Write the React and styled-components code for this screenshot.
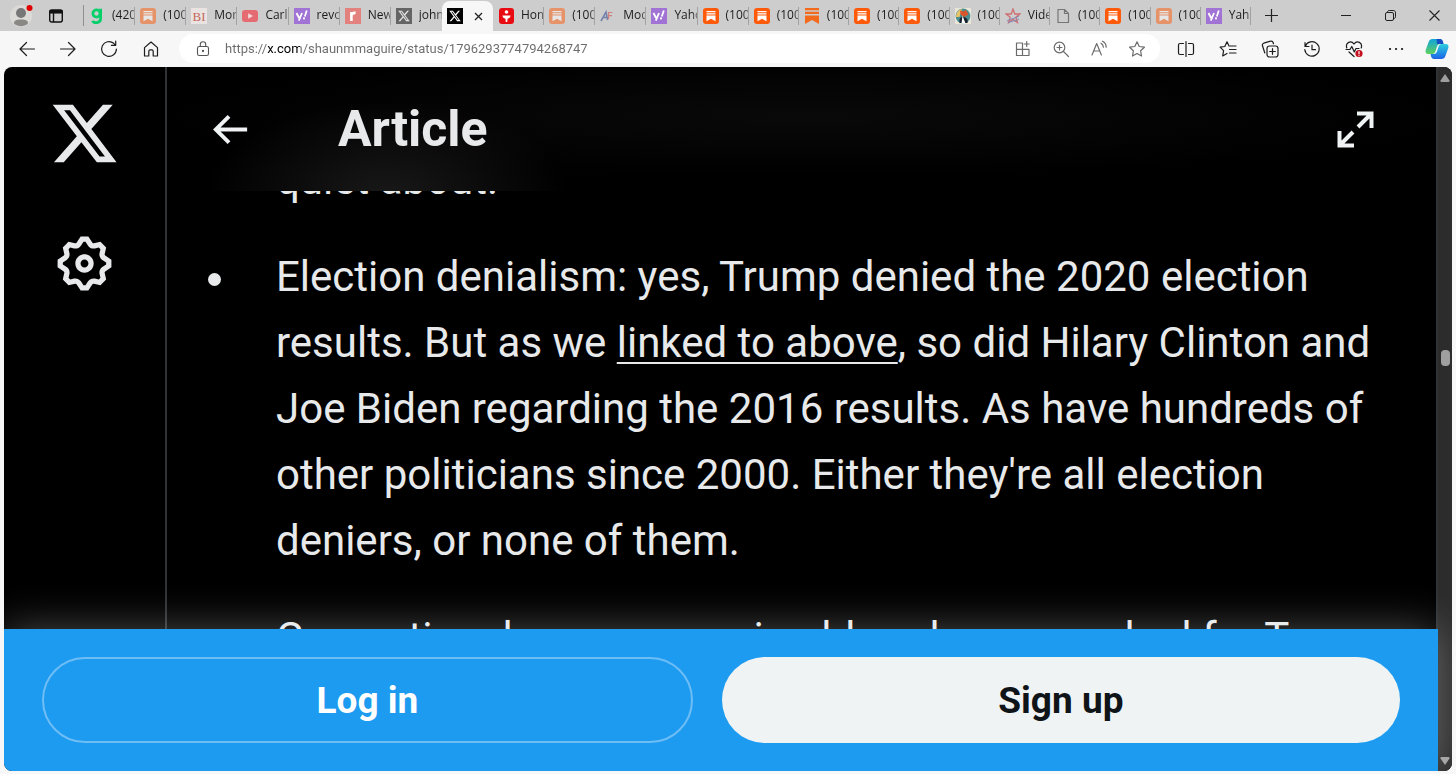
import React from "react";
import styled, { createGlobalStyle, css } from "styled-components";

const GlobalStyle = createGlobalStyle`
  *, *::before, *::after { box-sizing: border-box; }
  body { margin: 0; background: #f7f7f7; }
  button { font: inherit; color: inherit; border: 0; padding: 0; background: none; cursor: pointer; }
  ul { margin: 0; padding: 0; list-style: none; }
  svg { display: block; flex: none; }
`;

const chromeFont = `"Open Sans", "Noto Sans", sans-serif`;
const pageFont = `Roboto, "Noto Sans", sans-serif`;

/* ---------- browser chrome ---------- */

const Browser = styled.div`
  display: flex;
  flex-direction: column;
  height: 100vh;
  overflow: hidden;
  font-family: ${chromeFont};
`;

const TabStrip = styled.header`
  display: flex;
  flex: none;
  height: 31px;
  background: #cdcdcd;
  color: #1b1b1b;
`;

const ProfileArea = styled.div`
  display: flex;
  align-items: center;
  gap: 14px;
  width: 84px;
  padding-left: 10px;
  border-right: 1px solid #8f8f8f;
  border-image: linear-gradient(transparent 6px, #8f8f8f 6px, #8f8f8f 25px, transparent 25px) 1;
  flex: none;
`;

const Tabs = styled.nav`
  display: flex;
  flex: 1;
  min-width: 0;
`;

const Tab = styled.button`
  display: flex;
  align-items: center;
  flex: ${(p) => (p.$early ? 51 : 50)} 1 0;
  min-width: 0;
  padding-left: 5px;
  gap: 7px;
  font-size: 12px;
  line-height: 16px;
  ${(p) =>
    p.$active &&
    css`
      margin-top: 1px;
      border-radius: 8px 8px 0 0;
      background: #f7f7f7;
      gap: 11px;
    `}
`;

const TabTitle = styled.span`
  flex: 1;
  overflow: hidden;
  white-space: nowrap;
  text-align: left;
  height: 18px;
  border-right: ${(p) => (p.$last ? "0" : "1px solid #7c7c7c")};
  mask-image: linear-gradient(to right, #000 70%, rgba(0, 0, 0, 0.5));
`;

const Favicon = styled.svg.attrs({ width: 16, height: 16, viewBox: "0 0 16 16" })`
  opacity: ${(p) => (p.$dim ? 0.5 : 1)};
`;

const WindowControls = styled.div`
  display: flex;
  flex: none;
  width: 205px;
`;

const WindowButton = styled.button`
  display: grid;
  place-items: center;
  width: ${(p) => (p.$wide ? 44 : 40)}px;
  margin-right: ${(p) => (p.$first ? "auto" : "0")};
`;

const Toolbar = styled.div`
  display: flex;
  align-items: center;
  flex: none;
  height: 36px;
  padding: 0 0 1px 6px;
  background: #f7f7f7;
  color: #1d1d1d;
`;

const ToolButton = styled.button`
  display: grid;
  place-items: center;
  flex: none;
  width: ${(p) => p.$w}px;
  height: 30px;
`;

const AddressBar = styled.form`
  display: flex;
  align-items: center;
  flex: 1;
  min-width: 0;
  height: 29px;
  margin: 0 5px 0 8px;
  padding: 0 4px 0 16px;
  border-radius: 15px;
  background: #fff;
  color: #6c6c6c;
`;

const AddressInput = styled.input`
  flex: 1;
  min-width: 0;
  margin-left: 14px;
  padding: 0;
  border: 0;
  outline: 0;
  font-family: ${pageFont};
  font-size: 13px;
  line-height: 20px;
  color: transparent;
  background: linear-gradient(to right, #6b6b6b 42px, #000 42px, #000 75px, #6b6b6b 75px);
  background-clip: text;
  -webkit-background-clip: text;
`;

/* ---------- web page ---------- */

const Viewport = styled.div`
  display: flex;
  flex: 1;
  min-height: 0;
  margin: 0 4px 3px;
  border-radius: 8px;
  overflow: hidden;
  background: #000;
  color: #e7e9ea;
  font-family: ${pageFont};
`;

const Page = styled.div`
  display: flex;
  flex-direction: column;
  flex: 1;
  min-width: 0;
`;

const Columns = styled.div`
  display: flex;
  flex: 1;
  min-height: 0;
`;

const SideNav = styled.nav`
  display: flex;
  flex-direction: column;
  align-items: center;
  flex: none;
  width: 163px;
  padding-top: 31px;
  gap: 63px;
  border-right: 2px solid #2f3336;
`;

const Column = styled.main`
  display: flex;
  flex-direction: column;
  flex: 1;
  min-width: 0;
  border-right: 2px solid #2f3336;
`;

const ArticleHeader = styled.div`
  display: flex;
  align-items: center;
  flex: none;
  height: 124px;
  padding: 0 62px 0 39px;
  background:
    radial-gradient(ellipse 180px 90px at 220px 125px, #181818, transparent),
    radial-gradient(ellipse 640px 60px at 640px 50px, #090909, transparent),
    #000;
`;

const Title = styled.h1`
  flex: 1;
  margin: 0 0 0 85px;
  font-size: 50px;
  line-height: 60px;
  font-weight: 700;
`;

const ArticleBody = styled.div`
  flex: 1;
  min-height: 0;
  overflow: hidden;
`;

const Points = styled.ul`
  display: flex;
  flex-direction: column;
  gap: 31px;
  margin-top: -44px;
`;

const Point = styled.li`
  display: flex;
  gap: 55px;
  padding: 0 40px 0 41px;
  font-size: 42px;
  line-height: 66px;
`;

const Bullet = styled.span`
  flex: none;
  width: 13px;
  height: 13px;
  margin-top: 29px;
  border-radius: 50%;
  background: #e7e9ea;
`;

const TextLink = styled.a`
  color: inherit;
  text-decoration: underline;
  text-decoration-thickness: 2px;
  text-underline-offset: 5px;
`;

const SignBar = styled.div`
  position: relative;
  display: flex;
  flex: none;
  gap: 29px;
  padding: 28px 38px;
  background: #1d9bf0;
  box-shadow: 0 0 40px rgba(255, 255, 255, 0.3);
`;

const PillButton = styled.button`
  flex: 1 1 auto;
  height: 86px;
  border-radius: 43px;
  font-size: 37px;
  font-weight: 700;
  ${(p) =>
    p.$filled
      ? css`
          padding: 0 4px;
          background: #eff3f4;
          color: #0f1419;
        `
      : css`
          border: 2px solid #6fbdf5;
          color: #fff;
        `}
`;

const ScrollTrack = styled.div`
  display: flex;
  flex-direction: column;
  align-items: center;
  flex: none;
  width: 14px;
  padding: 7px 0 6px;
  background: #2c2c2c;
  color: #9f9f9f;
`;

const TrackSpace = styled.div`
  flex: ${(p) => p.$grow};
`;

const Thumb = styled.div`
  width: 9px;
  height: 16px;
  border-radius: 4px;
  background: #9f9f9f;
`;

/* ---------- drawings ---------- */

const X_PATH =
  "M18.244 2.25h3.308l-7.227 8.26 8.502 11.24H16.17l-5.214-6.817L4.99 21.75H1.68l7.73-8.835L1.254 2.25H8.08l4.713 6.231zm-1.161 17.52h1.833L7.084 4.126H5.117z";

const GEAR_PATH =
  "M10.54 1.75h2.92l1.57 2.36c.11.17.32.25.53.21l2.53-.59 2.17 2.17-.58 2.54c-.05.2.04.41.21.53l2.36 1.57v2.92l-2.36 1.57c-.17.12-.26.33-.21.53l.58 2.54-2.17 2.17-2.53-.59c-.21-.04-.42.04-.53.21l-1.57 2.36h-2.92l-1.58-2.36c-.11-.17-.32-.25-.52-.21l-2.54.59-2.17-2.17.58-2.54c.05-.2-.03-.41-.21-.53l-2.35-1.57v-2.92L4.1 8.97c.18-.12.26-.33.21-.53L3.73 5.9 5.9 3.73l2.54.59c.2.04.41-.04.52-.21l1.58-2.36zm1.07 2l-.98 1.47C10.05 6.08 9 6.5 7.99 6.27l-1.46-.34-.6.6.33 1.46c.24 1.01-.18 2.07-1.05 2.64l-1.46.98v.78l1.46.98c.87.57 1.29 1.63 1.05 2.64l-.33 1.46.6.6 1.46-.34c1.01-.23 2.06.19 2.64 1.05l.98 1.47h.78l.97-1.47c.58-.86 1.63-1.28 2.65-1.05l1.45.34.61-.6-.34-1.46c-.23-1.01.18-2.07 1.05-2.64l1.47-.98v-.78l-1.47-.98c-.87-.57-1.28-1.63-1.05-2.64l.34-1.46-.61-.6-1.45.34c-1.02.23-2.07-.19-2.65-1.05l-.97-1.47h-.78zM12 10.5c-.83 0-1.5.67-1.5 1.5s.67 1.5 1.5 1.5c.82 0 1.5-.67 1.5-1.5s-.68-1.5-1.5-1.5zM8.5 12c0-1.93 1.56-3.5 3.5-3.5 1.93 0 3.5 1.57 3.5 3.5s-1.57 3.5-3.5 3.5c-1.94 0-3.5-1.57-3.5-3.5z";

const LineIcon = styled.svg.attrs({ width: 18, height: 18, viewBox: "0 0 18 18" })`
  fill: none;
  stroke: currentColor;
  stroke-width: 1.2px;
  stroke-linecap: round;
  stroke-linejoin: round;
`;

const marks = {
  g: (
    <g fill="none" stroke="#06d06a" strokeWidth="2.8">
      <circle cx="7.5" cy="5.5" r="3.6" />
      <path d="M11.6 .8v9.8c0 5-6.8 5-8.2 2.3" />
    </g>
  ),
  sub: (
    <>
      <rect width="16" height="16" rx="3" fill="#ff5a0a" />
      <path d="M3.5 3.6h9M3.5 5.8h9" stroke="#fff" strokeWidth="1.2" />
      <path d="M3.5 7.4h9v5.8L8 10.7l-4.5 2.5z" fill="#fff" />
    </>
  ),
  bookmark: (
    <path d="M1 0h14v2.2H1zM1 3.8h14V6H1zM1 7.4h14V16l-7-3.9L1 16z" fill="#f26a1b" />
  ),
  bi: (
    <>
      <rect width="16" height="16" fill="#e9e4e2" />
      <text x="8" y="13" textAnchor="middle" fontFamily="Liberation Serif, serif" fontSize="13" fill="#c4675a">BI</text>
    </>
  ),
  yt: (
    <>
      <rect y="2" width="16" height="12" rx="3" fill="#e56a72" />
      <path d="M6.2 5.2v5.6L11 8z" fill="#f5dada" />
    </>
  ),
  yahoo: (
    <>
      <rect width="16" height="16" fill="#a073d4" />
      <path d="M2.5 5l2.6 5M8 5l-3.2 7.6M12.8 2.5l-2 6" stroke="#fff" strokeWidth="1.8" />
      <circle cx="10" cy="10.4" r="1.1" fill="#fff" />
    </>
  ),
  r: (
    <>
      <rect width="16" height="16" fill="#e3817f" />
      <path d="M6.4 13V4M6.4 7.4c.6-2 2-2.8 4.2-2.5" stroke="#fff" strokeWidth="2.6" fill="none" />
    </>
  ),
  x: (
    <>
      <rect width="16" height="16" fill="#000" />
      <path d={X_PATH} fill="#fff" transform="translate(1.6 1.6) scale(.53)" />
    </>
  ),
  red: (
    <>
      <rect x="1" width="15" height="16" rx="3" fill="#e80c12" />
      <circle cx="8.5" cy="4" r="1.8" fill="#fff" />
      <path d="M4.500 7.500h8c0 1.800-1.300 3-3 3.200L9.300 14H7.700l-.2-3.300c-1.700-.2-3-1.400-3-3.200z" fill="#fff" />
    </>
  ),
  af: (
    <>
      <path d="M1 13L6 4l1.600 8M3 9.500h4" stroke="#7583ac" strokeWidth="1.600" fill="none" />
      <path d="M8.500 11V4.500h4M8.500 7.600H12" stroke="#d2807f" strokeWidth="1.200" fill="none" />
    </>
  ),
  dog: (
    <>
      <rect width="16" height="16" fill="#e9e6d8" />
      <circle cx="8" cy="8" r="7.400" fill="#4b8f93" />
      <path d="M1 9C1 4 4 1.500 7 1L4.500 9z" fill="#e8c36a" />
      <path d="M5 2.500l3.500 1L11 2l2.500 4.500L9 9 5.500 6.500z" fill="#d9552b" />
      <path d="M4.500 15c-.5-4 1-7 4.500-6s4 3 3.500 6z" fill="#16202c" />
      <path d="M6.500 15.500l1-8 3 8z" fill="#fff" />
    </>
  ),
  star: (
    <>
      <path d="M8 1l1.800 5H15l-4.200 3.300 1.600 5.200L8 11.400l-4.400 3.100 1.600-5.200L1 6h5.200z" fill="none" stroke="#cf6f72" strokeWidth="1.300" />
      <path d="M2 13c4-3 8-2 12-5M3 15c4-3 7-1 11-4" stroke="#8189b8" fill="none" />
    </>
  ),
  page: (
    <path d="M3 1.500h6.500L13.500 5.500v9H3zM9.500 1.500v4h4" fill="none" stroke="#767676" strokeWidth="1.200" strokeLinejoin="round" />
  ),
};

const tabs = [
  { icon: "g", title: "(420)" },
  { icon: "sub", title: "(100)", dim: true },
  { icon: "bi", title: "More" },
  { icon: "yt", title: "Carl" },
  { icon: "yahoo", title: "revol" },
  { icon: "r", title: "New" },
  { icon: "x", title: "john", dim: true, last: true },
  { icon: "x", active: true },
  { icon: "red", title: "Hom" },
  { icon: "sub", title: "(100)", dim: true },
  { icon: "af", title: "Mod" },
  { icon: "yahoo", title: "Yaho" },
  { icon: "sub", title: "(100)" },
  { icon: "sub", title: "(100)" },
  { icon: "bookmark", title: "(100)" },
  { icon: "sub", title: "(100)" },
  { icon: "sub", title: "(100)" },
  { icon: "dog", title: "(100)" },
  { icon: "star", title: "Vide" },
  { icon: "page", title: "(100)" },
  { icon: "sub", title: "(100)" },
  { icon: "sub", title: "(100)", dim: true },
  { icon: "yahoo", title: "Yaho" },
];

const lineIcons = {
  back: <path d="M16.500 9H2M8.500 2.500L2 9l6.500 6.500" />,
  forward: <path d="M1.500 9H16M9.500 2.500L16 9l-6.500 6.500" />,
  reload: <path d="M16.400 9a7.400 7.400 0 1 1-2.700-5.700l1.800 1.800M15.700 1v4.300h-4.300" />,
  home: <path d="M2.500 7.600L9 2l6.500 5.600V16h-4.300v-4.600c0-1-.6-1.600-1.400-1.600H8.200c-.8 0-1.400.6-1.400 1.600V16H2.500z" />,
  apps: <path d="M2.500 3H8.500v12.500h-6zM2.500 9.300h12.500v6.200H8.500M12.700 1.500v5M10.200 4h5" />,
  zoom: (
    <>
      <circle cx="7.500" cy="7.500" r="5.300" />
      <path d="M11.500 11.500l5 5M7.500 5v5M5 7.500h5" />
    </>
  ),
  read: <path d="M2 15L6.700 3.500 11.400 15M3.600 11h6.200M11 3.200c1.600.9 2.300 2.200 2.400 4M12.500 1.200c2.400 1.100 3.600 3 3.700 6" />,
  favorite: <path d="M9 1.800l2.200 4.700 5.200.7-3.800 3.600.9 5.200L9 13.500 4.500 16l.9-5.200L1.600 7.200l5.200-.7z" />,
  split: <path d="M6.500 3.500H3A1.500 1.500 0 0 0 1.500 5v8A1.500 1.500 0 0 0 3 14.500h3.500M11.500 3.500H15A1.500 1.500 0 0 1 16.500 5v8a1.500 1.500 0 0 1-1.500 1.500h-3.500M9 1.500v15" />,
  favorites: <path d="M10 6L8 1.800 5.800 6.500l-4.700.7 3.500 3.500-.9 5.200L8 13.500M11 6h6M10.500 9.500H17M10.500 13H17" />,
  collections: (
    <>
      <rect x="6" y="6" width="11" height="11" rx="2.500" />
      <path d="M11.500 8.700v5.600M8.700 11.500h5.600M3.800 13L1.500 5.800c-.4-1.200.2-2.200 1.200-2.600L9.500 1.200c1.200-.4 2.200.2 2.600 1.300l.4 1.300" />
    </>
  ),
  history: <path d="M2 2.500v4h4M2.300 6.200A7.200 7.200 0 1 1 1.800 9.500M9 5v4.700h3.500" />,
  health: (
    <>
      <path d="M1.800 8C0 2.500 6-.2 9 4c3-4.200 9-1.500 7.200 4M1 9.500h4l1.800-3 2.500 5.500 1.700-3.500h3M4 12l5 4.500" />
      <circle cx="14" cy="13.500" r="3.600" fill="#c50f1f" stroke="none" />
      <path d="M14 11.500v2.300M14 15.500v.1" stroke="#fff" />
    </>
  ),
  more: <path d="M3 9h.1M9 9h.1M15 9h.1" strokeWidth="2.200" />,
};

const siteTools = [
  ["apps", "App available"],
  ["zoom", "Zoom"],
  ["read", "Read aloud"],
  ["favorite", "Add to favorites"],
];

const browserTools = [
  ["split", "Split screen"],
  ["favorites", "Favorites"],
  ["collections", "Collections"],
  ["history", "History"],
  ["health", "Browser essentials"],
  ["more", "Settings and more"],
];

function Tool({ name, label, width }) {
  return (
    <ToolButton type="button" aria-label={label} $w={width}>
      <LineIcon aria-hidden="true">{lineIcons[name]}</LineIcon>
    </ToolButton>
  );
}

function Copilot() {
  return (
    <svg width="24" height="22" viewBox="0 0 24 22" aria-hidden="true">
      <defs>
        <linearGradient id="copilotLeft" x1="0" y1="0" x2="0" y2="1">
          <stop offset="0" stopColor="#12a5dc" />
          <stop offset="1" stopColor="#5ed05c" />
        </linearGradient>
        <linearGradient id="copilotRight" x1="0" y1="0" x2="0" y2="1">
          <stop offset="0" stopColor="#2ad0dd" />
          <stop offset="1" stopColor="#1c62e8" />
        </linearGradient>
      </defs>
      <path d="M7.500 1H15c1.500 0 2.400 1 2.900 2.500L18.500 6H15c-1.600 0-2.500.9-3 2.500l-1.600 5C9.900 15 9 16 7.400 16H3.500C1 16 0 14.400.7 12L3.600 4C4.200 2.200 5.500 1 7.500 1z" fill="url(#copilotLeft)" />
      <path d="M11.500 1H15c1.500 0 2.400 1 2.900 2.500L18.500 6H12z" fill="#1750c4" />
      <path d="M16.500 21H9c-1.500 0-2.400-1-2.900-2.500L5.500 16H9c1.600 0 2.500-.9 3-2.500l1.600-5C14.100 7 15 6 16.600 6h3.900c2.500 0 3.500 1.600 2.800 4l-2.900 8c-.6 1.800-1.900 3-3.900 3z" fill="url(#copilotRight)" />
    </svg>
  );
}

export default function App() {
  return (
    <Browser>
      <GlobalStyle />
      <TabStrip>
        <ProfileArea>
          <button type="button" aria-label="Profile">
            <svg width="24" height="24" viewBox="0 0 24 24" aria-hidden="true">
              <circle cx="11" cy="12" r="11" fill="#dcdad7" />
              <circle cx="11" cy="9" r="5" fill="#777" />
              <path d="M4 19.500C4 16.500 6 15.500 11 15.500s7 1 7 4c-2 2-4.500 2.700-7 2.700s-5-.7-7-2.700z" fill="#8a8885" />
              <circle cx="19.500" cy="4" r="3" fill="#e00000" />
            </svg>
          </button>
          <button type="button" aria-label="Tab actions">
            <svg width="16" height="16" viewBox="0 0 16 16" fill="none" stroke="#111" aria-hidden="true">
              <rect x="1.700" y="2" width="12.600" height="12" rx="2" strokeWidth="1.400" />
              <path d="M1.500 3.800h13" strokeWidth="3.500" />
              <path d="M5.500 5v9" strokeWidth="1.400" />
            </svg>
          </button>
        </ProfileArea>
        <Tabs aria-label="Open tabs">
          {tabs.map((tab, i) => (
            <Tab
              key={i}
              type="button"
              $early={i < 13}
              $active={tab.active}
              aria-label={tab.active ? "Current tab" : undefined}
            >
              <Favicon $dim={tab.dim} aria-hidden="true">{marks[tab.icon]}</Favicon>
              {tab.active ? (
                <svg width="9" height="9" viewBox="0 0 9 9" stroke="#222" strokeWidth="1.300" aria-hidden="true">
                  <path d="M1 1l7 7M8 1L1 8" />
                </svg>
              ) : (
                <TabTitle $last={tab.last}>{tab.title}</TabTitle>
              )}
            </Tab>
          ))}
        </Tabs>
        <WindowControls>
          <WindowButton type="button" aria-label="New tab" $first>
            <svg width="13" height="13" viewBox="0 0 13 13" stroke="#222" strokeWidth="1.200"><path d="M6.500 0v13M0 6.500h13" /></svg>
          </WindowButton>
          <WindowButton type="button" aria-label="Minimize" $wide>
            <svg width="10" height="10" viewBox="0 0 10 10" stroke="#222"><path d="M0 4.500h10" /></svg>
          </WindowButton>
          <WindowButton type="button" aria-label="Restore" $wide>
            <svg width="11" height="11" viewBox="0 0 11 11" stroke="#222" fill="none">
              <rect x=".5" y="2.500" width="8" height="8" rx="1.500" />
              <path d="M2.500 2.500C2.500 1 3.200.5 4.200.5h4c1.500 0 2.300.8 2.300 2.300v4c0 1-.6 1.700-2 1.700" />
            </svg>
          </WindowButton>
          <WindowButton type="button" aria-label="Close" $wide>
            <svg width="11" height="11" viewBox="0 0 11 11" stroke="#222" strokeWidth="1.100"><path d="M.5.5l10 10M10.500.5l-10 10" /></svg>
          </WindowButton>
        </WindowControls>
      </TabStrip>

      <Toolbar>
        <Tool name="back" label="Back" width={41} />
        <Tool name="forward" label="Forward" width={41} />
        <Tool name="reload" label="Refresh" width={42} />
        <Tool name="home" label="Home" width={41} />
        <AddressBar onSubmit={(e) => e.preventDefault()}>
          <svg width="16" height="18" viewBox="0 0 16 18" fill="none" stroke="#555" strokeWidth="1.100" aria-hidden="true">
            <rect x="2.500" y="6.500" width="11" height="9" rx="1.800" />
            <path d="M5.300 6.500V4.400a2.700 2.700 0 0 1 5.400 0v2.100" />
            <circle cx="8" cy="11" r=".6" />
          </svg>
          <AddressInput
            type="text"
            aria-label="Address"
            defaultValue="https://x.com/shaunmmaguire/status/1796293774794268747"
          />
          {siteTools.map(([name, label]) => (
            <Tool key={name} name={name} label={label} width={38} />
          ))}
        </AddressBar>
        {browserTools.map(([name, label]) => (
          <Tool key={name} name={name} label={label} width={42} />
        ))}
        <ToolButton type="button" aria-label="Copilot" $w={39}>
          <Copilot />
        </ToolButton>
      </Toolbar>

      <Viewport>
        <Page>
          <Columns>
            <SideNav aria-label="Main">
              <a href="#home" aria-label="X">
                <svg width="71" height="71" viewBox="0 0 24 24" fill="#e7e9ea"><path d={X_PATH} /></svg>
              </a>
              <a href="#settings" aria-label="Settings">
                <svg width="63" height="63" viewBox="0 0 24 24" fill="#e7e9ea"><path d={GEAR_PATH} /></svg>
              </a>
            </SideNav>
            <Column>
              <ArticleHeader>
                <button type="button" aria-label="Back">
                  <svg width="47" height="47" viewBox="0 0 24 24" fill="#eff3f4">
                    <path d="M7.414 13l5.043 5.040-1.414 1.420L3.586 12l7.457-7.460 1.414 1.420L7.414 11H21v2H7.414z" />
                  </svg>
                </button>
                <Title>Article</Title>
                <button type="button" aria-label="Expand">
                  <svg width="37" height="37" viewBox="0 0 37 37" fill="none" stroke="#eff3f4" strokeWidth="4">
                    <path d="M20 2.500h14.500V17M34 3L21 16M2.500 20v14.500H17M3 34l13-13" />
                  </svg>
                </button>
              </ArticleHeader>
              <ArticleBody>
                <Points>
                  <Point>
                    <Bullet />
                    <span>quiet about.</span>
                  </Point>
                  <Point>
                    <Bullet />
                    <span>
                      Election denialism: yes, Trump denied the 2020 election results. But as we{" "}
                      <TextLink href="#linked">linked to above</TextLink>, so did Hilary Clinton and Joe Biden
                      regarding the 2016 results. As have hundreds of other politicians since 2000. Either
                      they're all election deniers, or none of them.
                    </span>
                  </Point>
                  <Point>
                    <Bullet />
                    <span>Generational wages even in old we hopes worked for Trump</span>
                  </Point>
                </Points>
              </ArticleBody>
            </Column>
          </Columns>
          <SignBar>
            <PillButton type="button">Log in</PillButton>
            <PillButton type="button" $filled>Sign up</PillButton>
          </SignBar>
        </Page>
        <ScrollTrack aria-hidden="true">
          <svg width="10" height="8" viewBox="0 0 10 8" fill="currentColor"><path d="M5 0l4.500 6.500q.3 1.500-1 1.500h-7q-1.300 0-1-1.500z" /></svg>
          <TrackSpace $grow={13} />
          <Thumb />
          <TrackSpace $grow={19} />
          <svg width="10" height="8" viewBox="0 0 10 8" fill="currentColor"><path d="M5 8L.5 1.500Q.2 0 1.500 0h7q1.300 0 1 1.500z" /></svg>
        </ScrollTrack>
      </Viewport>
    </Browser>
  );
}
